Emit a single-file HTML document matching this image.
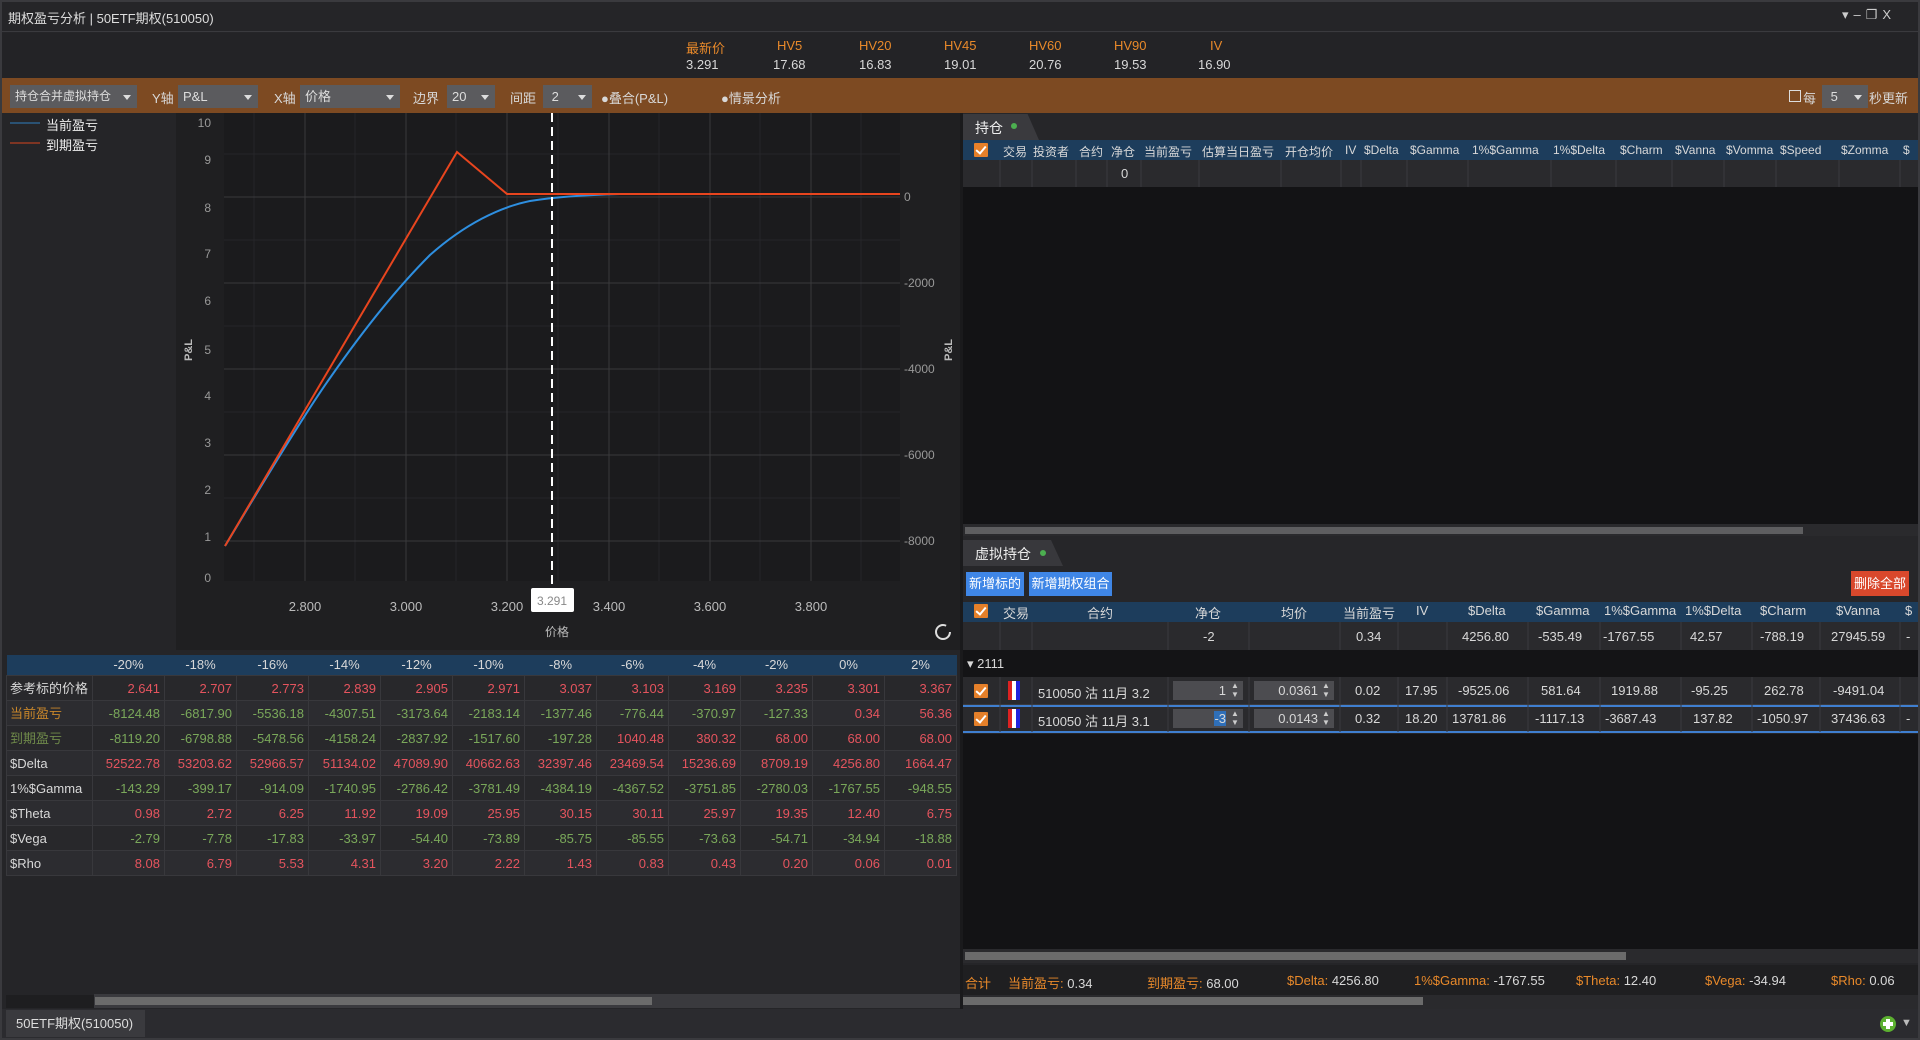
<!DOCTYPE html>
<html><head><meta charset="utf-8">
<style>
*{margin:0;padding:0;box-sizing:border-box}
body{width:1920px;height:1040px;background:#252528;font-family:"Liberation Sans","Noto Sans CJK SC",sans-serif;font-size:13px;color:#d8d8d8;position:relative;overflow:hidden}
.a{position:absolute;white-space:nowrap}
.or{color:#e8892a}
.sel{position:absolute;background:#5b5b5e;height:23px;top:85px;color:#ddd;line-height:23px;padding-left:5px;font-size:13px}
.sel:after{content:"";position:absolute;right:6px;top:10px;border-left:4px solid transparent;border-right:4px solid transparent;border-top:5px solid #ddd}
.cb{position:absolute;width:14px;height:14px;background:#e5802a;border-radius:1px}
.cb:after{content:"";position:absolute;left:4px;top:1px;width:4px;height:8px;border:solid #fff;border-width:0 2px 2px 0;transform:rotate(40deg)}
table{border-collapse:collapse}
.lt td{height:25px;border:1px solid #38383c;text-align:right;padding-right:4px;font-size:13px;line-height:23px}
.lt td:first-child{text-align:left;padding-left:3px}
.lt tr.h td{text-align:center;border:none;height:20px;line-height:20px;padding:0}
.r{color:#e5545e}.g{color:#7aa85a}
.hd{font-size:12px;top:143px}
</style></head><body>
<div class="a" style="left:0;top:0;width:1920px;height:32px;background:#252528;border-bottom:1px solid #3a3a3e"></div>
<div class="a" style="left:8px;top:8px;color:#ddd">期权盈亏分析 | 50ETF期权(510050)</div>
<div class="a" style="left:1842px;top:7px;color:#ccc;font-size:13px;letter-spacing:5px">▾–❐X</div>
<div class="a" style="left:2px;top:33px;width:1916px;height:45px;background:#232326"></div>
<div class="a or" style="left:686px;top:38px">最新价</div><div class="a" style="left:686px;top:57px">3.291</div>
<div class="a or" style="left:777px;top:38px">HV5</div><div class="a" style="left:773px;top:57px">17.68</div>
<div class="a or" style="left:859px;top:38px">HV20</div><div class="a" style="left:859px;top:57px">16.83</div>
<div class="a or" style="left:944px;top:38px">HV45</div><div class="a" style="left:944px;top:57px">19.01</div>
<div class="a or" style="left:1029px;top:38px">HV60</div><div class="a" style="left:1029px;top:57px">20.76</div>
<div class="a or" style="left:1114px;top:38px">HV90</div><div class="a" style="left:1114px;top:57px">19.53</div>
<div class="a or" style="left:1210px;top:38px">IV</div><div class="a" style="left:1198px;top:57px">16.90</div>
<div class="a" style="left:2px;top:78px;width:1916px;height:35px;background:#7d4a22"></div>
<div class="sel" style="left:10px;width:127px;font-size:12px">持仓合并虚拟持仓</div>
<div class="a" style="left:152px;top:88px">Y轴</div><div class="sel" style="left:178px;width:80px">P&amp;L</div>
<div class="a" style="left:274px;top:88px">X轴</div><div class="sel" style="left:300px;width:100px">价格</div>
<div class="a" style="left:413px;top:88px">边界</div><div class="sel" style="left:447px;width:48px">20</div>
<div class="a" style="left:510px;top:88px">间距</div><div class="sel" style="left:543px;width:49px">&nbsp;2</div>
<div class="a" style="left:601px;top:88px">●叠合(P&amp;L)</div>
<div class="a" style="left:721px;top:88px">●情景分析</div>
<div class="a" style="left:1789px;top:90px;width:12px;height:12px;border:1px solid #ddd"></div>
<div class="a" style="left:1803px;top:88px">每</div><div class="sel" style="left:1822px;width:46px">&nbsp;5</div>
<div class="a" style="left:1869px;top:88px">秒更新</div>
<div class="a" style="left:2px;top:113px;width:958px;height:537px;background:#252528"></div>
<div class="a" style="left:176px;top:113px;width:784px;height:537px;background:#1f1f21"></div>
<svg class="a" style="left:0;top:0" width="960" height="650" viewBox="0 0 960 650">
<rect x="224" y="113" width="676" height="468" fill="#1b1b1d"/>
<g stroke="#262629" stroke-width="1">
<line x1="224" y1="154" x2="900" y2="154"/><line x1="224" y1="240" x2="900" y2="240"/><line x1="224" y1="326" x2="900" y2="326"/><line x1="224" y1="412" x2="900" y2="412"/><line x1="224" y1="498" x2="900" y2="498"/>
<line x1="254" y1="113" x2="254" y2="581"/><line x1="355" y1="113" x2="355" y2="581"/><line x1="456" y1="113" x2="456" y2="581"/><line x1="558" y1="113" x2="558" y2="581"/><line x1="659" y1="113" x2="659" y2="581"/><line x1="760" y1="113" x2="760" y2="581"/><line x1="861" y1="113" x2="861" y2="581"/>
</g>
<g stroke="#39393c" stroke-width="1">
<line x1="224" y1="197" x2="900" y2="197"/><line x1="224" y1="283" x2="900" y2="283"/><line x1="224" y1="369" x2="900" y2="369"/><line x1="224" y1="455" x2="900" y2="455"/><line x1="224" y1="541" x2="900" y2="541"/>
<line x1="305" y1="113" x2="305" y2="581"/><line x1="406" y1="113" x2="406" y2="581"/><line x1="507" y1="113" x2="507" y2="581"/><line x1="609" y1="113" x2="609" y2="581"/><line x1="710" y1="113" x2="710" y2="581"/><line x1="811" y1="113" x2="811" y2="581"/>
</g>
<g fill="#999" font-size="12" text-anchor="end" font-family="Liberation Sans,sans-serif">
<text x="211" y="127">10</text><text x="211" y="164">9</text><text x="211" y="212">8</text><text x="211" y="258">7</text><text x="211" y="305">6</text><text x="211" y="354">5</text><text x="211" y="400">4</text><text x="211" y="447">3</text><text x="211" y="494">2</text><text x="211" y="541">1</text><text x="211" y="582">0</text>
</g>
<g fill="#999" font-size="12" font-family="Liberation Sans,sans-serif">
<text x="904" y="201">0</text><text x="904" y="287">-2000</text><text x="904" y="373">-4000</text><text x="904" y="459">-6000</text><text x="904" y="545">-8000</text>
</g>
<g fill="#bbb" font-size="13" text-anchor="middle" font-family="Liberation Sans,sans-serif">
<text x="305" y="611">2.800</text><text x="406" y="611">3.000</text><text x="507" y="611">3.200</text><text x="609" y="611">3.400</text><text x="710" y="611">3.600</text><text x="811" y="611">3.800</text>
</g>
<text x="557" y="636" fill="#bbb" font-size="12" text-anchor="middle" font-family="Noto Sans CJK SC,sans-serif">价格</text>
<text transform="translate(192,350) rotate(-90)" fill="#bbb" font-size="11" font-weight="bold" text-anchor="middle" font-family="Liberation Sans,sans-serif">P&amp;L</text>
<text transform="translate(952,350) rotate(-90)" fill="#bbb" font-size="11" font-weight="bold" text-anchor="middle" font-family="Liberation Sans,sans-serif">P&amp;L</text>
<path fill="none" stroke="#2e8fe0" stroke-width="2" d="M225,546 C245,513 300,420 330,378 C360,335 395,290 430,255 C465,224 500,207 530,201 C555,197 580,195 620,194 L700,194"/>
<polyline fill="none" stroke="#e8451e" stroke-width="2" points="225,546 457,152 507,194 900,194"/>
<line x1="552" y1="113" x2="552" y2="590" stroke="#fff" stroke-width="2" stroke-dasharray="9,5"/>
<rect x="531" y="588" width="43" height="24" rx="2" fill="#fff"/>
<text x="552" y="605" fill="#888" font-size="12" text-anchor="middle" font-family="Liberation Sans,sans-serif">3.291</text>
<line x1="10" y1="123" x2="40" y2="123" stroke="#2e7fc0" stroke-width="1"/>
<line x1="10" y1="143" x2="40" y2="143" stroke="#d8451e" stroke-width="1"/>
<circle cx="943" cy="632" r="7" fill="none" stroke="#ddd" stroke-width="2" stroke-dasharray="36,8"/>
</svg>
<div class="a" style="left:46px;top:115px;color:#eee">当前盈亏</div>
<div class="a" style="left:46px;top:135px;color:#eee">到期盈亏</div>
<div class="a" style="left:2px;top:650px;width:958px;height:360px;background:#252528"></div>
<table class="a lt" style="left:6px;top:655px;width:950px;table-layout:fixed">
<colgroup><col style="width:86px"><col span="12" style="width:72px"></colgroup>
<tr class="h" style="background:#1d3d5c"><td></td><td>-20%</td><td>-18%</td><td>-16%</td><td>-14%</td><td>-12%</td><td>-10%</td><td>-8%</td><td>-6%</td><td>-4%</td><td>-2%</td><td>0%</td><td>2%</td></tr>
<tr style="background:#28282b"><td>参考标的价格</td><td class="r">2.641</td><td class="r">2.707</td><td class="r">2.773</td><td class="r">2.839</td><td class="r">2.905</td><td class="r">2.971</td><td class="r">3.037</td><td class="r">3.103</td><td class="r">3.169</td><td class="r">3.235</td><td class="r">3.301</td><td class="r">3.367</td></tr>
<tr style="background:#2c2c30"><td style="color:#c8862a">当前盈亏</td><td class="g">-8124.48</td><td class="g">-6817.90</td><td class="g">-5536.18</td><td class="g">-4307.51</td><td class="g">-3173.64</td><td class="g">-2183.14</td><td class="g">-1377.46</td><td class="g">-776.44</td><td class="g">-370.97</td><td class="g">-127.33</td><td class="r">0.34</td><td class="r">56.36</td></tr>
<tr style="background:#28282b"><td style="color:#6f8a4a">到期盈亏</td><td class="g">-8119.20</td><td class="g">-6798.88</td><td class="g">-5478.56</td><td class="g">-4158.24</td><td class="g">-2837.92</td><td class="g">-1517.60</td><td class="g">-197.28</td><td class="r">1040.48</td><td class="r">380.32</td><td class="r">68.00</td><td class="r">68.00</td><td class="r">68.00</td></tr>
<tr style="background:#2c2c30"><td>$Delta</td><td class="r">52522.78</td><td class="r">53203.62</td><td class="r">52966.57</td><td class="r">51134.02</td><td class="r">47089.90</td><td class="r">40662.63</td><td class="r">32397.46</td><td class="r">23469.54</td><td class="r">15236.69</td><td class="r">8709.19</td><td class="r">4256.80</td><td class="r">1664.47</td></tr>
<tr style="background:#28282b"><td>1%$Gamma</td><td class="g">-143.29</td><td class="g">-399.17</td><td class="g">-914.09</td><td class="g">-1740.95</td><td class="g">-2786.42</td><td class="g">-3781.49</td><td class="g">-4384.19</td><td class="g">-4367.52</td><td class="g">-3751.85</td><td class="g">-2780.03</td><td class="g">-1767.55</td><td class="g">-948.55</td></tr>
<tr style="background:#2c2c30"><td>$Theta</td><td class="r">0.98</td><td class="r">2.72</td><td class="r">6.25</td><td class="r">11.92</td><td class="r">19.09</td><td class="r">25.95</td><td class="r">30.15</td><td class="r">30.11</td><td class="r">25.97</td><td class="r">19.35</td><td class="r">12.40</td><td class="r">6.75</td></tr>
<tr style="background:#28282b"><td>$Vega</td><td class="g">-2.79</td><td class="g">-7.78</td><td class="g">-17.83</td><td class="g">-33.97</td><td class="g">-54.40</td><td class="g">-73.89</td><td class="g">-85.75</td><td class="g">-85.55</td><td class="g">-73.63</td><td class="g">-54.71</td><td class="g">-34.94</td><td class="g">-18.88</td></tr>
<tr style="background:#2c2c30"><td>$Rho</td><td class="r">8.08</td><td class="r">6.79</td><td class="r">5.53</td><td class="r">4.31</td><td class="r">3.20</td><td class="r">2.22</td><td class="r">1.43</td><td class="r">0.83</td><td class="r">0.43</td><td class="r">0.20</td><td class="r">0.06</td><td class="r">0.01</td></tr>
</table>
<div class="a" style="left:6px;top:995px;width:88px;height:13px;background:#1e1e20"></div>
<div class="a" style="left:94px;top:994px;width:866px;height:14px;background:#3a3a3e"></div>
<div class="a" style="left:95px;top:997px;width:557px;height:8px;background:#6b6b6b"></div>
<div class="a" style="left:960px;top:113px;width:3px;height:897px;background:#1a1a1c"></div>
<div class="a" style="left:963px;top:113px;width:955px;height:27px;background:#262629"></div>
<div class="a" style="left:963px;top:114px;width:76px;height:26px;background:#3a3a3e;clip-path:polygon(0 0,85% 0,100% 100%,0 100%)"></div>
<div class="a" style="left:975px;top:118px;color:#eee;font-size:14px">持仓</div>
<div class="a" style="left:1011px;top:123px;width:6px;height:6px;border-radius:3px;background:#4caf50"></div>
<div class="a" style="left:963px;top:140px;width:955px;height:20px;background:#1d3d5c"></div>
<div class="cb" style="left:974px;top:143px"></div>
<div class="a hd" style="left:1003px">交易</div>
<div class="a hd" style="left:1033px">投资者</div>
<div class="a hd" style="left:1079px">合约</div>
<div class="a hd" style="left:1111px">净仓</div>
<div class="a hd" style="left:1144px">当前盈亏</div>
<div class="a hd" style="left:1202px">估算当日盈亏</div>
<div class="a hd" style="left:1285px">开仓均价</div>
<div class="a hd" style="left:1345px">IV</div>
<div class="a hd" style="left:1364px">$Delta</div>
<div class="a hd" style="left:1410px">$Gamma</div>
<div class="a hd" style="left:1472px">1%$Gamma</div>
<div class="a hd" style="left:1553px">1%$Delta</div>
<div class="a hd" style="left:1620px">$Charm</div>
<div class="a hd" style="left:1675px">$Vanna</div>
<div class="a hd" style="left:1726px">$Vomma</div>
<div class="a hd" style="left:1780px">$Speed</div>
<div class="a hd" style="left:1841px">$Zomma</div>
<div class="a hd" style="left:1903px">$</div>
<div class="a" style="left:963px;top:160px;width:955px;height:27px;background:#2a2a2d"></div>
<svg class="a" style="left:963px;top:160px" width="955" height="27"><g stroke="#3a3a3e">
<line x1="37" y1="0" x2="37" y2="27"/><line x1="69" y1="0" x2="69" y2="27"/><line x1="113" y1="0" x2="113" y2="27"/><line x1="144" y1="0" x2="144" y2="27"/><line x1="178" y1="0" x2="178" y2="27"/><line x1="236" y1="0" x2="236" y2="27"/><line x1="318" y1="0" x2="318" y2="27"/><line x1="378" y1="0" x2="378" y2="27"/><line x1="398" y1="0" x2="398" y2="27"/><line x1="444" y1="0" x2="444" y2="27"/><line x1="505" y1="0" x2="505" y2="27"/><line x1="588" y1="0" x2="588" y2="27"/><line x1="653" y1="0" x2="653" y2="27"/><line x1="709" y1="0" x2="709" y2="27"/><line x1="761" y1="0" x2="761" y2="27"/><line x1="813" y1="0" x2="813" y2="27"/><line x1="876" y1="0" x2="876" y2="27"/><line x1="937" y1="0" x2="937" y2="27"/></g></svg>
<div class="a" style="left:1121px;top:166px">0</div>
<div class="a" style="left:963px;top:187px;width:955px;height:337px;background:#131315"></div>
<div class="a" style="left:963px;top:524px;width:955px;height:12px;background:#2a2a2d"></div>
<div class="a" style="left:965px;top:527px;width:838px;height:7px;background:#5e5e60"></div>
<div class="a" style="left:963px;top:536px;width:955px;height:30px;background:#262629"></div>
<div class="a" style="left:963px;top:540px;width:100px;height:26px;background:#38383c;clip-path:polygon(0 0,88% 0,100% 100%,0 100%)"></div>
<div class="a" style="left:975px;top:544px;color:#eee;font-size:14px">虚拟持仓</div>
<div class="a" style="left:1040px;top:550px;width:6px;height:6px;border-radius:3px;background:#4caf50"></div>
<div class="a" style="left:963px;top:566px;width:955px;height:36px;background:#262629"></div>
<div class="a" style="left:966px;top:572px;width:58px;height:24px;background:#3f86e6;color:#fff;line-height:24px;text-align:center;font-size:13px">新增标的</div>
<div class="a" style="left:1029px;top:572px;width:83px;height:24px;background:#3f86e6;color:#fff;line-height:24px;text-align:center;font-size:13px">新增期权组合</div>
<div class="a" style="left:1851px;top:571px;width:58px;height:25px;background:#d9482c;color:#fff;line-height:25px;text-align:center;font-size:13px">删除全部</div>
<div class="a" style="left:963px;top:602px;width:955px;height:20px;background:#1d3d5c"></div>
<div class="cb" style="left:974px;top:604px"></div>
<div class="a" style="left:1003px;top:603px">交易</div>
<div class="a" style="left:1087px;top:603px">合约</div>
<div class="a" style="left:1195px;top:603px">净仓</div>
<div class="a" style="left:1281px;top:603px">均价</div>
<div class="a" style="left:1343px;top:603px">当前盈亏</div>
<div class="a" style="left:1416px;top:603px">IV</div>
<div class="a" style="left:1468px;top:603px">$Delta</div>
<div class="a" style="left:1536px;top:603px">$Gamma</div>
<div class="a" style="left:1604px;top:603px">1%$Gamma</div>
<div class="a" style="left:1685px;top:603px">1%$Delta</div>
<div class="a" style="left:1760px;top:603px">$Charm</div>
<div class="a" style="left:1836px;top:603px">$Vanna</div>
<div class="a" style="left:1905px;top:603px">$</div>
<div class="a" style="left:963px;top:622px;width:955px;height:28px;background:#2a2a2d"></div>
<div class="a" style="left:963px;top:650px;width:955px;height:27px;background:#141416"></div>
<div class="a" style="left:963px;top:677px;width:955px;height:55px;background:#2a2a2d"></div>
<div class="a" style="left:963px;top:705px;width:955px;height:28px;border:2px solid #3f7fd0;border-left:none;border-right:none"></div>
<svg class="a" style="left:963px;top:622px" width="955" height="110"><g stroke="#3a3a3e">
<line x1="37" y1="0" x2="37" y2="28"/><line x1="69" y1="0" x2="69" y2="28"/><line x1="205" y1="0" x2="205" y2="28"/><line x1="286" y1="0" x2="286" y2="28"/><line x1="377" y1="0" x2="377" y2="28"/><line x1="435" y1="0" x2="435" y2="28"/><line x1="484" y1="0" x2="484" y2="28"/><line x1="565" y1="0" x2="565" y2="28"/><line x1="637" y1="0" x2="637" y2="28"/><line x1="718" y1="0" x2="718" y2="28"/><line x1="789" y1="0" x2="789" y2="28"/><line x1="857" y1="0" x2="857" y2="28"/><line x1="937" y1="0" x2="937" y2="28"/>
<g transform="translate(0,55)"><line x1="37" y1="0" x2="37" y2="55"/><line x1="69" y1="0" x2="69" y2="55"/><line x1="205" y1="0" x2="205" y2="55"/><line x1="286" y1="0" x2="286" y2="55"/><line x1="377" y1="0" x2="377" y2="55"/><line x1="435" y1="0" x2="435" y2="55"/><line x1="484" y1="0" x2="484" y2="55"/><line x1="565" y1="0" x2="565" y2="55"/><line x1="637" y1="0" x2="637" y2="55"/><line x1="718" y1="0" x2="718" y2="55"/><line x1="789" y1="0" x2="789" y2="55"/><line x1="857" y1="0" x2="857" y2="55"/><line x1="937" y1="0" x2="937" y2="55"/><line x1="0" y1="27.5" x2="955" y2="27.5"/></g></g></svg>
<div class="a" style="left:1203px;top:629px">-2</div>
<div class="a" style="left:1356px;top:629px">0.34</div>
<div class="a" style="left:1462px;top:629px">4256.80</div>
<div class="a" style="left:1538px;top:629px">-535.49</div>
<div class="a" style="left:1603px;top:629px">-1767.55</div>
<div class="a" style="left:1690px;top:629px">42.57</div>
<div class="a" style="left:1760px;top:629px">-788.19</div>
<div class="a" style="left:1831px;top:629px">27945.59</div>
<div class="a" style="left:1906px;top:629px">-</div>
<div class="a" style="left:967px;top:656px">▾ 2111</div>
<div class="cb" style="left:974px;top:684px"></div>
<div class="a" style="left:1008px;top:681px;width:12px;height:19px;background:linear-gradient(90deg,#d22 0 33%,#fff 33% 66%,#22d 66%)"></div>
<div class="a" style="left:1038px;top:683px">510050 沽 11月 3.2</div>
<div class="a" style="left:1173px;top:681px;width:70px;height:19px;background:#4c4c50;text-align:right;padding-right:17px;line-height:19px">1</div>
<div class="a" style="left:1231px;top:681px;font-size:8px;line-height:9px;color:#ccc">▲<br>▼</div>
<div class="a" style="left:1254px;top:681px;width:80px;height:19px;background:#4c4c50;text-align:right;padding-right:16px;line-height:19px">0.0361</div>
<div class="a" style="left:1322px;top:681px;font-size:8px;line-height:9px;color:#ccc">▲<br>▼</div>
<div class="a" style="left:1355px;top:683px">0.02</div>
<div class="a" style="left:1405px;top:683px">17.95</div>
<div class="a" style="left:1458px;top:683px">-9525.06</div>
<div class="a" style="left:1541px;top:683px">581.64</div>
<div class="a" style="left:1611px;top:683px">1919.88</div>
<div class="a" style="left:1691px;top:683px">-95.25</div>
<div class="a" style="left:1764px;top:683px">262.78</div>
<div class="a" style="left:1833px;top:683px">-9491.04</div>
<div class="cb" style="left:974px;top:712px"></div>
<div class="a" style="left:1008px;top:709px;width:12px;height:19px;background:linear-gradient(90deg,#d22 0 33%,#fff 33% 66%,#22d 66%)"></div>
<div class="a" style="left:1038px;top:711px">510050 沽 11月 3.1</div>
<div class="a" style="left:1173px;top:709px;width:70px;height:19px;background:#4c4c50;text-align:right;padding-right:17px;line-height:19px"><span style="background:#2f6fb8">-3</span></div>
<div class="a" style="left:1231px;top:709px;font-size:8px;line-height:9px;color:#ccc">▲<br>▼</div>
<div class="a" style="left:1254px;top:709px;width:80px;height:19px;background:#4c4c50;text-align:right;padding-right:16px;line-height:19px">0.0143</div>
<div class="a" style="left:1322px;top:709px;font-size:8px;line-height:9px;color:#ccc">▲<br>▼</div>
<div class="a" style="left:1355px;top:711px">0.32</div>
<div class="a" style="left:1405px;top:711px">18.20</div>
<div class="a" style="left:1452px;top:711px">13781.86</div>
<div class="a" style="left:1535px;top:711px">-1117.13</div>
<div class="a" style="left:1605px;top:711px">-3687.43</div>
<div class="a" style="left:1693px;top:711px">137.82</div>
<div class="a" style="left:1757px;top:711px">-1050.97</div>
<div class="a" style="left:1831px;top:711px">37436.63</div>
<div class="a" style="left:1906px;top:711px">-</div>
<div class="a" style="left:963px;top:734px;width:955px;height:215px;background:#131315"></div>
<div class="a" style="left:963px;top:949px;width:955px;height:14px;background:#2a2a2d"></div>
<div class="a" style="left:965px;top:952px;width:661px;height:8px;background:#6b6b6b"></div>
<div class="a" style="left:963px;top:965px;width:955px;height:30px;background:#1f1f21"></div>
<div class="a or" style="left:965px;top:973px">合计</div>
<div class="a" style="left:1008px;top:973px"><span class="or">当前盈亏:</span> 0.34</div>
<div class="a" style="left:1147px;top:973px"><span class="or">到期盈亏:</span> 68.00</div>
<div class="a" style="left:1287px;top:973px"><span class="or">$Delta:</span> 4256.80</div>
<div class="a" style="left:1414px;top:973px"><span class="or">1%$Gamma:</span> -1767.55</div>
<div class="a" style="left:1576px;top:973px"><span class="or">$Theta:</span> 12.40</div>
<div class="a" style="left:1705px;top:973px"><span class="or">$Vega:</span> -34.94</div>
<div class="a" style="left:1831px;top:973px"><span class="or">$Rho:</span> 0.06</div>
<div class="a" style="left:963px;top:995px;width:955px;height:14px;background:#2a2a2d"></div>
<div class="a" style="left:963px;top:997px;width:460px;height:8px;background:#6b6b6b"></div>
<div class="a" style="left:0;top:1009px;width:1920px;height:31px;background:#2b2b2f"></div>
<div class="a" style="left:6px;top:1010px;width:139px;height:27px;background:#3a3a3e;color:#ddd;line-height:27px;padding-left:10px">50ETF期权(510050)</div>
<div class="a" style="left:1880px;top:1016px;width:16px;height:16px;border-radius:8px;background:#5cb030"></div>
<div class="a" style="left:1883px;top:1022px;width:10px;height:4px;background:#fff"></div>
<div class="a" style="left:1886px;top:1019px;width:4px;height:10px;background:#fff"></div>
<div class="a" style="left:1901px;top:1017px;color:#bbb;font-size:11px">▼</div>
<div class="a" style="left:0;top:0;width:1920px;height:1040px;border:2px solid #3a3a3e;pointer-events:none"></div>
</body></html>
